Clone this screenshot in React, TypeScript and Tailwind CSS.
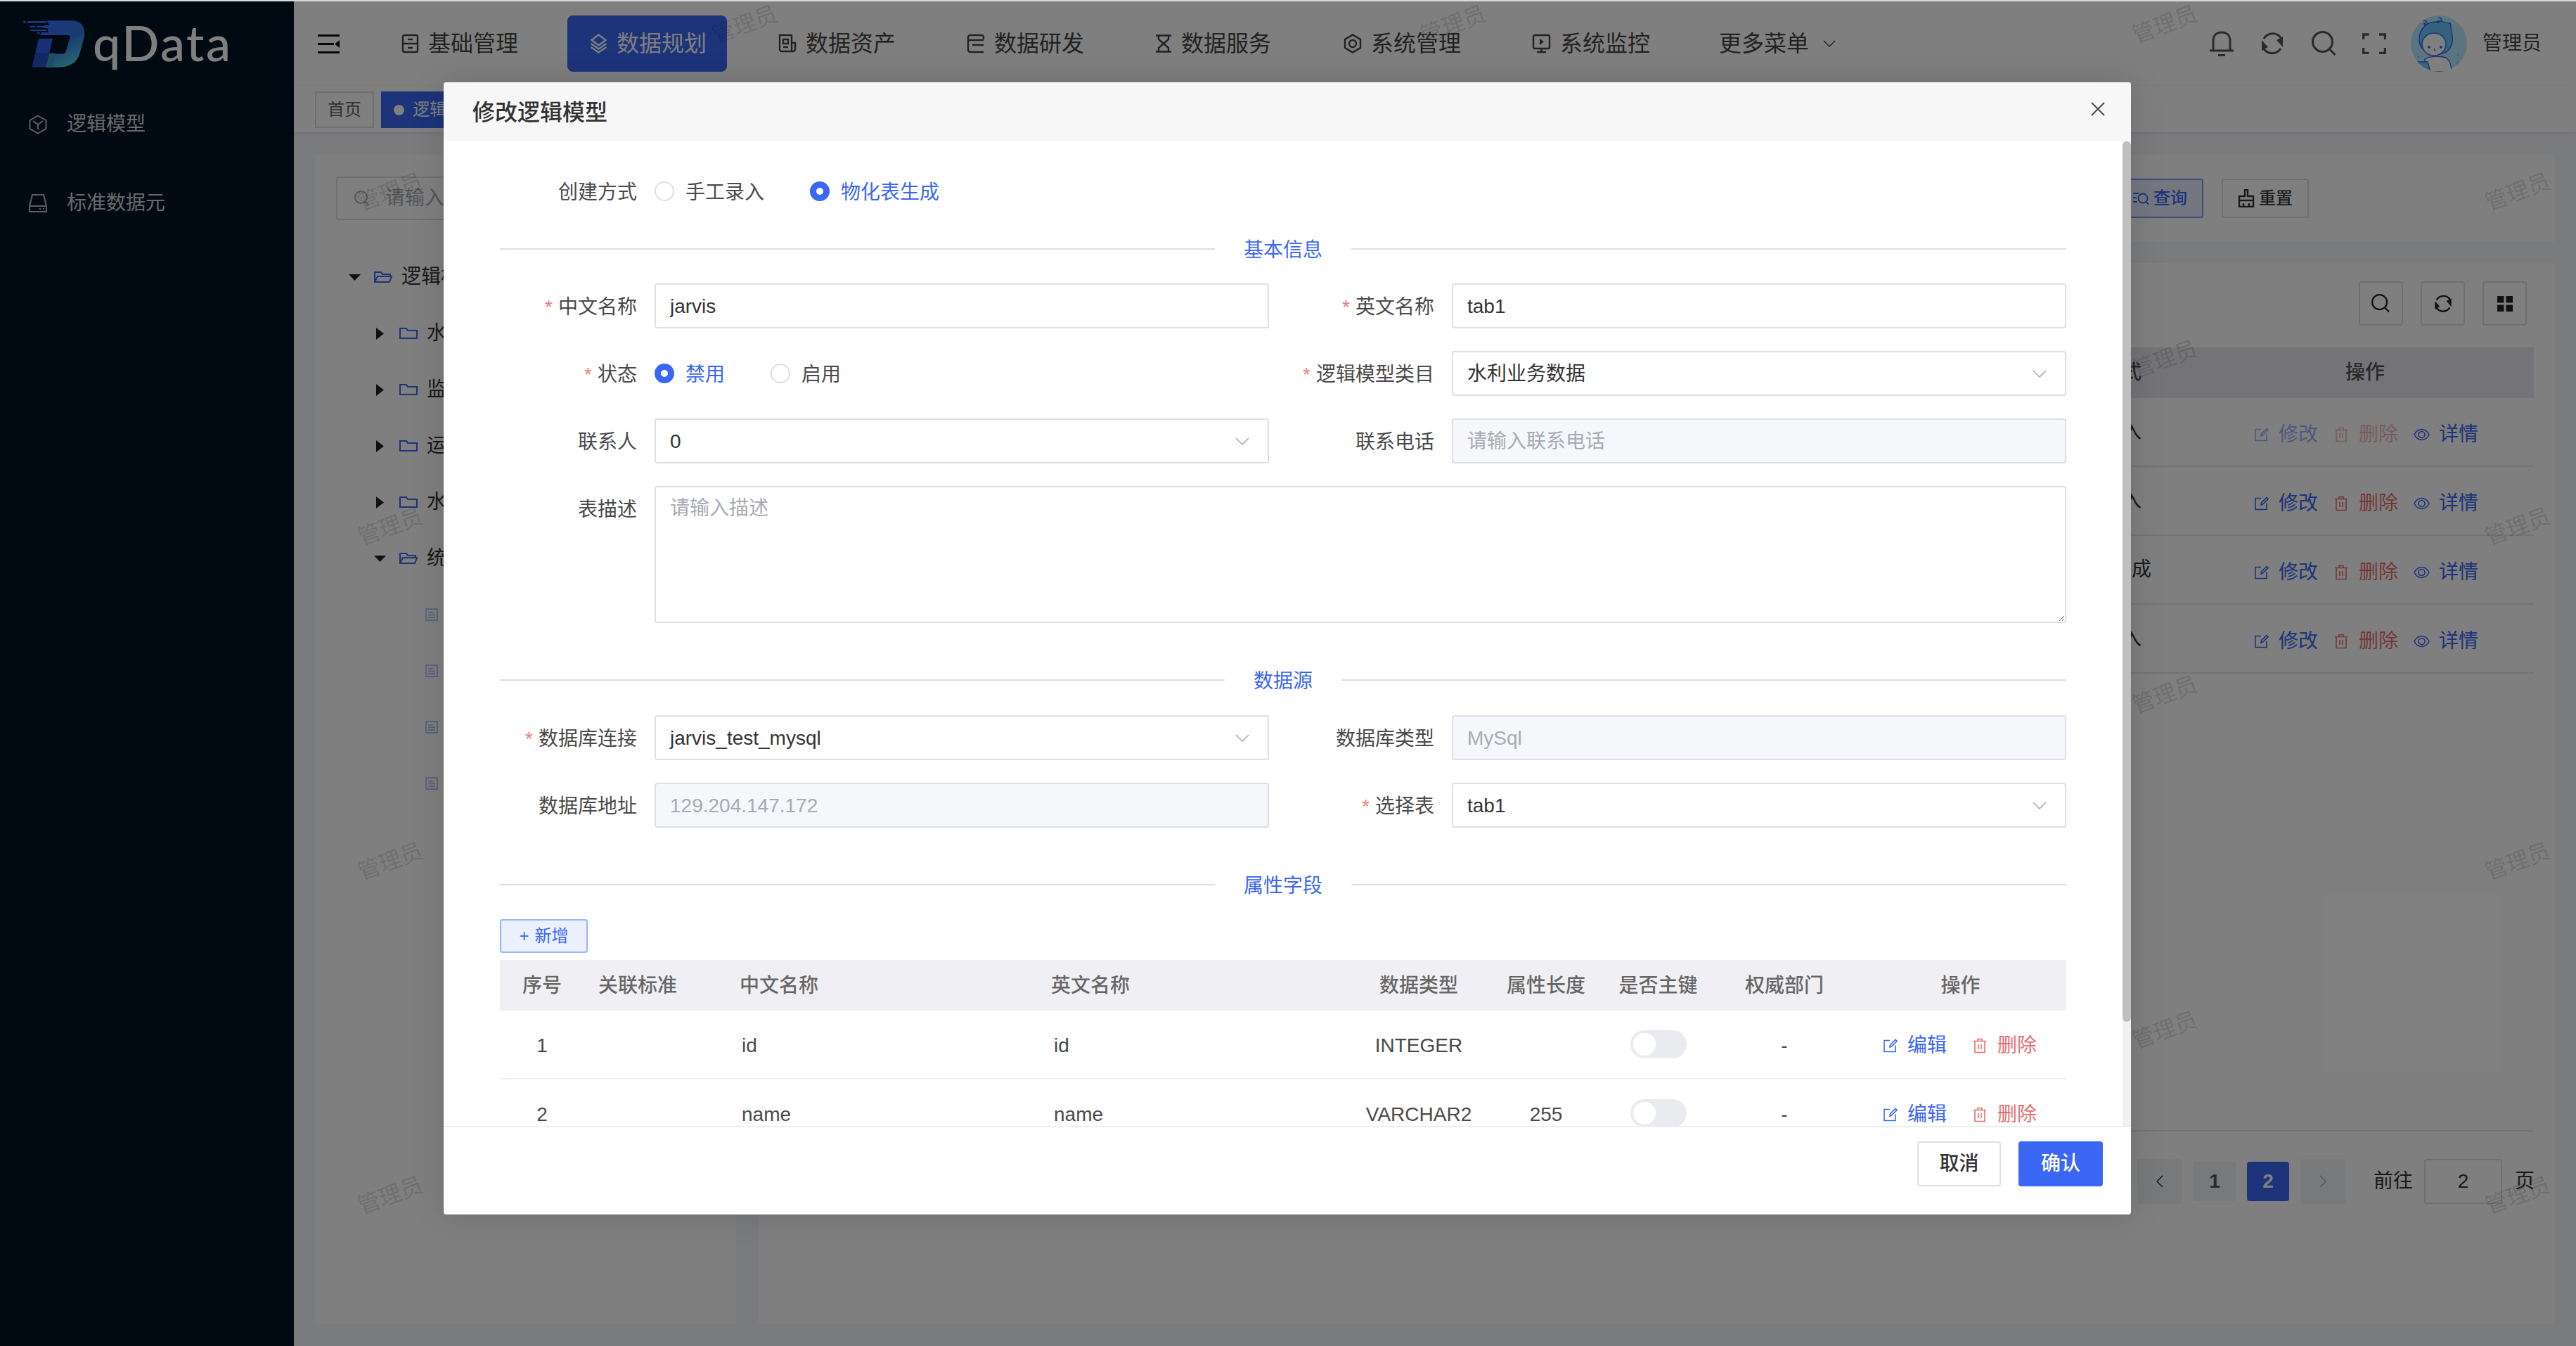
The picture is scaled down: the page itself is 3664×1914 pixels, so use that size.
import { ReactNode } from "react";

const stack = "[font-family:'Liberation_Sans','Noto_Sans_CJK_SC',sans-serif]";
const tableCols = "grid grid-cols-[120px_152px_492px_442px_202px_160px_159px_200px_301px]";

const IconBase = ({ w, h, vw, vh, sw = 2.4, children }: { w: number; h: number; vw?: number; vh?: number; sw?: number; children: ReactNode }) => (
  <svg width={w} height={h} viewBox={`0 0 ${vw ?? w} ${vh ?? h}`} fill="none" stroke="currentColor" strokeWidth={sw} className="shrink-0">
    {children}
  </svg>
);

const MenuIcon = ({ kind }: { kind: string }) => {
  if (kind === "base")
    return (
      <IconBase w={25} h={28}>
        <rect x="2" y="2" width="21" height="24" rx="2" />
        <path d="M2 14h21M9 8h7M9 20h7" />
      </IconBase>
    );
  if (kind === "plan")
    return (
      <IconBase w={25} h={28}>
        <path d="M12.5 1.5 22.500 9l-10 7.5L2.500 9z" />
        <path d="m1.500 14 11 7.500L23.500 14M1.500 19l11 7.500L23.500 19" />
      </IconBase>
    );
  if (kind === "asset")
    return (
      <IconBase w={26} h={28}>
        <path d="M21 25H5a3 3 0 0 1-3-3V2h17v23" />
        <path d="M19 13h5v9a3 3 0 0 1-3 3M7 8h7v6H7zM7 19h7" />
      </IconBase>
    );
  if (kind === "dev")
    return (
      <IconBase w={26} h={28}>
        <path d="M24 8V5a3 3 0 0 0-3-3H5a3 3 0 0 0-3 3v18a3 3 0 0 0 3 3h19" />
        <path d="M2 9h22M8 16h16" />
      </IconBase>
    );
  if (kind === "service")
    return (
      <IconBase w={24} h={28}>
        <path d="M1 2.5h22M1 25.5h22M5 3v5l14 12v5M19 3v5L5 20v5" />
      </IconBase>
    );
  if (kind === "system")
    return (
      <IconBase w={26} h={28}>
        <path d="M13 1.5 24 8v12l-11 6.5L2 20V8z" />
        <circle cx="13" cy="14" r="5" />
      </IconBase>
    );
  return (
    <IconBase w={27} h={28}>
      <rect x="2" y="2" width="23" height="19" rx="2" />
      <path d="M7 26h13M13.5 21v5" />
      <path d="m11 7 6 4.5-6 4.5z" fill="currentColor" stroke="none" />
    </IconBase>
  );
};

const Chevron = ({ w = 20, cls = "" }: { w?: number; cls?: string }) => (
  <svg width={w} height={w * 0.55} viewBox="0 0 20 11" fill="none" stroke="currentColor" strokeWidth="1.6" className={cls}>
    <path d="m1 1 9 9 9-9" />
  </svg>
);

const SyncIcon = ({ size = 36 }: { size?: number }) => (
  <svg width={size} height={size} viewBox="0 0 36 36" fill="none" stroke="currentColor" strokeWidth="3">
    <path d="M6 11A14.500 14.500 0 0 1 30.500 10M30 25A14.500 14.500 0 0 1 5 24" />
    <path d="M33 8v15l-9-10zM3 28V13l9 10z" fill="currentColor" stroke="none" />
  </svg>
);

const SearchIcon = ({ size = 36 }: { size?: number }) => (
  <svg width={size} height={size} viewBox="0 0 36 36" fill="none" stroke="currentColor" strokeWidth="3">
    <circle cx="15.500" cy="15.500" r="14" />
    <path d="m25.500 26 8 8" />
  </svg>
);

const EditIcon = () => (
  <svg width="20" height="20" viewBox="0 0 20 20" fill="none" stroke="currentColor" strokeWidth="1.6" className="shrink-0">
    <path d="M9 2.500H1v16h16v-9" />
    <path d="m9 12 .5-3L17 1.500l2 2L11.500 11z" />
  </svg>
);

const TrashIcon = () => (
  <svg width="20" height="22" viewBox="0 0 20 22" fill="none" stroke="currentColor" strokeWidth="1.6" className="shrink-0">
    <path d="M1 4.500h18M7 4.500V1.500h6v3M3 4.500v16h14v-16M8 9v7M12 9v7" />
  </svg>
);

const EyeIcon = () => (
  <svg width="23" height="18" viewBox="0 0 23 18" fill="none" stroke="currentColor" strokeWidth="1.6" className="shrink-0">
    <path d="M1 9c2.500-5 6-7.500 10.500-7.500S19.500 4 22 9c-2.500 5-6 7.500-10.500 7.500S3.500 14 1 9z" />
    <circle cx="11.500" cy="9" r="4.500" />
  </svg>
);

const FolderIcon = ({ open }: { open?: boolean }) => (
  <svg width="26" height="16" viewBox="0 0 26 16" fill="none" stroke="#3a67f4" strokeWidth="2" className="shrink-0">
    {open ? <path d="M1 15V1h9l2 3h11v3M1 15 5 7h20l-3 8z" /> : <path d="M1 15V1h9l2 3h13v11z" />}
  </svg>
);

const Caret = ({ open }: { open?: boolean }) =>
  open ? (
    <svg width="17" height="9" viewBox="0 0 17 9" className="shrink-0"><path d="M0 0h17L8.500 9z" fill="#222" /></svg>
  ) : (
    <svg width="11" height="17" viewBox="0 0 11 17" className="shrink-0"><path d="M0 0v17l11-8.500z" fill="#222" /></svg>
  );

const TreeRow = ({ pl, open, caret = true, folder = true, text }: { pl: number; open?: boolean; caret?: boolean; folder?: boolean; text: string }) => (
  <div className="h-[80px] flex items-center relative whitespace-nowrap text-[28px] text-[#333]" style={{ paddingLeft: pl }}>
    {caret && <span className="w-[36px] mr-[10px] flex justify-center"><Caret open={open} /></span>}
    {folder ? (
      <FolderIcon open={open} />
    ) : (
      <svg width="18" height="18" viewBox="0 0 18 18" fill="none" stroke="#a3b8f8" strokeWidth="1.5" className="shrink-0">
        <path d="M1 1h16v16H1zM4 6h7M4 9.500h10M4 13h10" />
      </svg>
    )}
    <span className="ml-[13px]">{text}</span>
  </div>
);

const Label = ({ text, req }: { text: string; req?: boolean }) => (
  <div className="w-[220px] shrink-0 pr-[25px] text-right text-[28px] leading-[64px] text-[#4a4a4a] whitespace-nowrap translate-y-[2px]">
    {req && <span className="text-[#ee7a7a] mr-[8px]">*</span>}
    {text}
  </div>
);

const Input = ({ value, placeholder, disabled }: { value?: string; placeholder?: string; disabled?: boolean }) => (
  <input
    readOnly
    value={value ?? ""}
    placeholder={placeholder}
    className={`flex-1 min-w-0 h-[64px] pl-[20px] pr-[20px] pt-[2px] border-2 border-[#dcdfe6] rounded-[4px] text-[28px] outline-none placeholder:text-[#a8abb2] ${disabled ? "bg-[#f5f7fa] text-[#a8abb2]" : "bg-white text-[#333]"}`}
  />
);

const Select = ({ value }: { value: string }) => (
  <div className="flex-1 min-w-0 h-[64px] pl-[20px] pr-[26px] border-2 border-[#dcdfe6] rounded-[4px] flex items-center justify-between text-[28px] text-[#333]">
    <span className="translate-y-[1px]">{value}</span>
    <Chevron cls="text-[#a8abb2]" />
  </div>
);

const Radio = ({ on, text }: { on?: boolean; text: string }) => (
  <div className="flex items-center gap-[16px] text-[28px] leading-[64px]">
    {on ? (
      <span className="w-[28px] h-[28px] rounded-full bg-[#3a67f4] flex items-center justify-center">
        <span className="w-[10px] h-[10px] rounded-full bg-white" />
      </span>
    ) : (
      <span className="w-[28px] h-[28px] rounded-full border-2 border-[#dcdfe6]" />
    )}
    <span className={`translate-y-[2px] ${on ? "text-[#3a67f4]" : "text-[#4a4a4a]"}`}>{text}</span>
  </div>
);

const Section = ({ text, cls }: { text: string; cls: string }) => (
  <div className={`h-[40px] flex items-center ${cls}`}>
    <div className="flex-1 h-[2px] bg-[#dcdfe6]" />
    <span className="px-[41px] text-[28px] text-[#3a67f4] translate-y-[2px]">{text}</span>
    <div className="flex-1 h-[2px] bg-[#dcdfe6]" />
  </div>
);

const Toggle = () => (
  <div className="w-[80px] h-[40px] rounded-full bg-[#e9ebef] flex items-center pl-[4px] -mt-[4px]">
    <span className="w-[32px] h-[32px] rounded-full bg-white" />
  </div>
);

const FieldRow = ({ no, cn, en, type, len }: { no: number; cn: string; en: string; type: string; len: string }) => (
  <div className={`${tableCols} h-[98px] pt-[3px] items-center border-b-2 border-[#eeeff4] text-[28px] text-[#4a4a4a]`}>
    <div className="text-center">{no}</div>
    <div />
    <div className="pl-[72px]">{cn}</div>
    <div className="pl-[24px]">{en}</div>
    <div className="text-center">{type}</div>
    <div className="text-center">{len}</div>
    <div className="flex justify-center"><Toggle /></div>
    <div className="text-center">-</div>
    <div className="flex items-center pl-[41px]">
      <span className="flex items-center gap-[14px] text-[#3a67f4]"><EditIcon /><span>编辑</span></span>
      <span className="flex items-center gap-[15px] text-[#e66f6f] ml-[37px]"><TrashIcon /><span>删除</span></span>
    </div>
  </div>
);

const Watermarks = () => {
  const spots: [number, number][] = [];
  [555, 1563, 2571, 3581].forEach((x) => [273, 749, 1225, 1700].forEach((y) => spots.push([x, y])));
  [1059, 2067, 3079].forEach((x) => [35, 511, 988, 1465].forEach((y) => spots.push([x, y])));
  return (
    <>
      {spots.map(([x, y]) => (
        <span
          key={`${x}-${y}`}
          className="absolute -translate-x-1/2 -translate-y-1/2 -rotate-[20deg] text-[32px] text-black/15 whitespace-nowrap pointer-events-none"
          style={{ left: x, top: y }}
        >
          管理员
        </span>
      ))}
    </>
  );
};

const MENU = [
  { kind: "base", text: "基础管理" },
  { kind: "plan", text: "数据规划", active: true },
  { kind: "asset", text: "数据资产" },
  { kind: "dev", text: "数据研发" },
  { kind: "service", text: "数据服务" },
  { kind: "system", text: "系统管理" },
  { kind: "monitor", text: "系统监控" },
];

const MODEL_ROWS = [
  { mode: "手工录入", dim: true },
  { mode: "手工录入" },
  { mode: "物化表生成" },
  { mode: "手工录入" },
];

const Avatar = () => (
  <svg width="80" height="80" viewBox="0 0 80 80" className="shrink-0">
    <defs>
      <clipPath id="av"><circle cx="40" cy="40" r="40" /></clipPath>
    </defs>
    <g clipPath="url(#av)">
      <rect width="80" height="80" fill="#b9e8ff" />
      <path d="M12 34c0-16 12-26 26-25 6-3 12 3 18 2 3 6 0 8 2 13 4 14-1 30-18 31-18 0-28-8-28-21z" fill="#6fc4ff" stroke="#2f6ff0" strokeWidth="1.500" />
      <ellipse cx="33" cy="41" rx="17" ry="16" fill="#fff" stroke="#2f6ff0" strokeWidth="1.500" />
      <circle cx="26" cy="45" r="2" fill="#2f6ff0" />
      <circle cx="43" cy="45" r="2" fill="#2f6ff0" />
      <path d="M34 47c-1 2 0 4 2 3" stroke="#2f6ff0" fill="none" strokeWidth="1.200" />
      <path d="M24 12c-1-4-3-5-6-5M44 9c0-4-2-6-5-6" stroke="#2f6ff0" fill="none" strokeWidth="1.500" />
      <circle cx="20" cy="12" r="2" fill="#2f6ff0" />
      <circle cx="39" cy="9" r="2" fill="#2f6ff0" />
      <path d="M20 80V62c6-4 22-5 30-2 6 4 8 12 8 20z" fill="#fff" stroke="#2f6ff0" strokeWidth="1.500" />
      <path d="M0 66h24l4 14H0z" fill="#6fc4ff" stroke="#2f6ff0" strokeWidth="1.500" />
      <circle cx="11" cy="59" r="1.500" fill="#6fc4ff" />
      <circle cx="66" cy="67" r="1.500" fill="#6fc4ff" />
      <circle cx="67" cy="56" r="1.500" fill="#6fc4ff" />
    </g>
  </svg>
);

export default function App() {
  return (
    <div className={`relative w-[3664px] h-[1914px] overflow-hidden flex flex-col bg-[#f5f6fa] ${stack}`}>
      <div className="h-[2px] shrink-0 bg-[#d8d8d8]" />
      <div className="flex-1 min-h-0 flex">
        {/* sidebar */}
        <aside className="w-[418px] shrink-0 bg-[#021224] text-white/90">
          <div className="h-[120px] flex items-center pl-[32px] gap-[10px]">
            <svg width="90" height="69" viewBox="36 34 270 208" className="shrink-0">
              <defs>
                <linearGradient id="lg" x1="0.3" y1="0" x2="0.8" y2="1">
                  <stop offset="0" stopColor="#3470ff" />
                  <stop offset="0.45" stopColor="#3478e0" />
                  <stop offset="1" stopColor="#55d8e8" />
                </linearGradient>
              </defs>
              <path d="M140 38H245C290 38 310 70 298 115L282 175C270 220 235 238 190 238H135L150 180H205C215 180 220 175 223 165L238 110C240 103 236 100 228 100H112L116 88H146L142 70H125L128 58H150z" fill="url(#lg)" />
              <path d="M105 115H165L150 178H90z" fill="#2f62f0" />
              <path d="M90 178H150L135 238H75z" fill="#2850c8" />
              <path d="M135 238 150 178H175L165 238z" fill="#3d9cc8" />
              <circle cx="44" cy="44" r="6" fill="#3470ff" />
              <path d="M55 40H140V48H55zM65 60H90V67H65zM96 60H140V67H96zM70 76H140V83H70zM98 88H110V95H98z" fill="#3470ff" />
            </svg>
            <span className="[font-family:Lato,sans-serif] text-[70px] leading-none text-white font-medium tracking-[2.5px] -mt-[4px]">qData</span>
          </div>
          <div className="mt-[23px] flex items-center h-[64px] pl-[41px] gap-[28px] text-[28px]">
            <svg width="26" height="28" viewBox="0 0 26 28" fill="none" stroke="currentColor" strokeWidth="2" className="shrink-0 opacity-80">
              <path d="M13 1.500 24.500 8v12L13 26.500 1.500 20V8z" />
              <path d="m6 9 7 5 7-5M13 14v7" />
            </svg>
            <span className="opacity-90">逻辑模型</span>
          </div>
          <div className="mt-[48px] flex items-center h-[64px] pl-[41px] gap-[28px] text-[28px]">
            <svg width="26" height="28" viewBox="0 0 26 28" fill="none" stroke="currentColor" strokeWidth="2" className="shrink-0 opacity-80">
              <path d="M5 2h16l4 16v8H1v-8zM1 18h24" />
              <path d="M15 22h2M20 22h2" />
            </svg>
            <span className="opacity-90">标准数据元</span>
          </div>
        </aside>

        <div className="flex-1 min-w-0 flex flex-col">
          {/* top bar */}
          <header className="h-[120px] shrink-0 bg-white flex items-center pl-[34px] text-[#444]">
            <svg width="31" height="27" viewBox="0 0 31 27" className="shrink-0 text-[#111]" fill="currentColor">
              <path d="M0 0h31v3H0zM0 12h23v3H0zM0 24h31v3H0zM31 8v11l-7-5.500z" />
            </svg>
            <nav className="ml-[56px] flex items-center gap-[41px]">
              {MENU.map((m) => (
                <div key={m.text} className={`w-[227px] h-[80px] rounded-[8px] flex items-center pl-[32px] gap-[13px] text-[32px] ${m.active ? "bg-[#3a67f4] text-white" : ""}`}>
                  <MenuIcon kind={m.kind} />
                  <span className="whitespace-nowrap">{m.text}</span>
                </div>
              ))}
              <div className="flex items-center gap-[20px] text-[32px] whitespace-nowrap pl-[30px]">
                <span>更多菜单</span>
                <Chevron w={18} />
              </div>
            </nav>
            <div className="ml-auto pr-[49px] flex items-center">
              <svg width="34" height="36" viewBox="0 0 34 36" fill="none" stroke="currentColor" strokeWidth="3" className="text-[#555]">
                <path d="M5 28V14C5 6 10 2 17 2s12 4 12 12v14M0 28h34" />
                <path d="M12 34.500h10" />
              </svg>
              <span className="ml-[37px] text-[#555]"><SyncIcon /></span>
              <span className="ml-[38px] text-[#555]"><SearchIcon /></span>
              <svg width="34" height="30" viewBox="0 0 34 30" fill="none" stroke="currentColor" strokeWidth="3.500" className="ml-[36px] text-[#555]">
                <path d="M1.500 9V2h8M24 2h8.500v7M1.500 21v7.500h8M24 28.500h8.500V21" />
              </svg>
              <div className="ml-[35px]"><Avatar /></div>
              <span className="ml-[22px] text-[28px] whitespace-nowrap">管理员</span>
            </div>
          </header>

          {/* tabs */}
          <div className="h-[66px] shrink-0 bg-white shadow-[0_2px_6px_rgba(0,0,0,0.08)] flex items-start pt-[8px] pl-[30px] gap-[10px] text-[24px]">
            <div className="w-[84px] h-[52px] border-2 border-[#ddd] flex items-center justify-center text-[#666]">首页</div>
            <div className="w-[200px] h-[52px] bg-[#3a67f4] flex items-center pl-[18px] gap-[12px] text-white">
              <span className="w-[15px] h-[15px] rounded-full bg-white" />
              <span>逻辑模型</span>
            </div>
          </div>

          {/* page */}
          <main className="flex-1 min-h-0 flex pt-[32px] pl-[30px] pr-[30px] pb-[31px] gap-[32px]">
            <section className="w-[599px] shrink-0 bg-white rounded-[4px] pt-[31px] pl-[30px] pr-[30px]">
              <div className="h-[62px] border-2 border-[#dcdfe6] rounded-[4px] flex items-center pl-[24px] gap-[22px] text-[28px] text-[#a8abb2]">
                <SearchIcon size={22} />
                <span>请输入</span>
              </div>
              <div className="mt-[41px] -ml-[30px]">
                <TreeRow pl={38} open text="逻辑模型目录" />
                <TreeRow pl={74} text="水利业务" />
                <TreeRow pl={74} text="监测数据" />
                <TreeRow pl={74} text="运行数据" />
                <TreeRow pl={74} text="水文数据" />
                <TreeRow pl={74} open text="统计数据" />
                <TreeRow pl={157} caret={false} folder={false} text="数据表一" />
                <TreeRow pl={157} caret={false} folder={false} text="数据表二" />
                <TreeRow pl={157} caret={false} folder={false} text="数据表三" />
                <TreeRow pl={157} caret={false} folder={false} text="数据表四" />
              </div>
            </section>

            <div className="flex-1 min-w-0 flex flex-col gap-[30px]">
              <section className="h-[124px] shrink-0 bg-white rounded-[4px] flex items-start justify-end pt-[34px] pr-[350px] gap-[26px] text-[24px]">
                <button className="w-[124px] h-[56px] border-2 border-[#7d9bf8] bg-[#e8eefe] rounded-[4px] flex items-center justify-center gap-[6px] text-[#3a67f4] font-medium">
                  <svg width="24" height="24" viewBox="0 0 24 24" fill="none" stroke="currentColor" strokeWidth="1.800" className="shrink-0">
                    <path d="M1 5h8M1 11h5M1 17h6" />
                    <circle cx="15" cy="12" r="6.500" />
                    <path d="m20 17 3 4" />
                  </svg>
                  查询
                </button>
                <button className="w-[124px] h-[56px] border-2 border-[#dcdfe6] rounded-[4px] flex items-center justify-center gap-[6px] text-[#333] font-medium">
                  <svg width="24" height="26" viewBox="0 0 24 26" fill="none" stroke="currentColor" strokeWidth="2.400" className="shrink-0">
                    <path d="M10 1h4v9h8v15H2V10h8zM2 16h20M8 25v-5M16 25v-5" />
                  </svg>
                  重置
                </button>
              </section>

              <section className="flex-1 min-h-0 bg-white rounded-[4px] pt-[26px] pl-[30px] pr-[30px] flex flex-col">
                <div className="h-[63px] shrink-0 flex justify-end gap-[25px] pr-[10px] text-[#222]">
                  <div className="w-[63px] h-[63px] border-2 border-[#dcdfe6] rounded-[4px] flex items-center justify-center"><SearchIcon size={27} /></div>
                  <div className="w-[63px] h-[63px] border-2 border-[#dcdfe6] rounded-[4px] flex items-center justify-center"><SyncIcon size={28} /></div>
                  <div className="w-[63px] h-[63px] border-2 border-[#dcdfe6] rounded-[4px] flex items-center justify-center">
                    <svg width="22" height="22" viewBox="0 0 22 22" fill="currentColor"><path d="M0 0h9.500v9.500H0zM12.500 0H22v9.500h-9.500zM0 12.500h9.500V22H0zM12.500 12.500H22V22h-9.500z" /></svg>
                  </div>
                </div>
                <div className="mt-[31px] h-[1115px] shrink-0 border-b-2 border-[#e8e9ee]">
                  <div className="grid grid-cols-[1fr_180px_44px_480px] h-[72px] items-center bg-[#e9e9f0] text-[28px] font-medium text-[#555]">
                    <div />
                    <div className="text-center">创建方式</div>
                    <div />
                    <div className="text-center">操作</div>
                  </div>
                  {MODEL_ROWS.map((r, i) => (
                    <div key={i} className="grid grid-cols-[1fr_180px_44px_480px] h-[98px] items-center border-b-2 border-[#e8e9ee] text-[28px] text-[#333]">
                      <div />
                      <div className="text-center">{r.mode}</div>
                      <div />
                      <div className="flex items-center pl-[83px] pt-[8px]">
                        <span className={`flex items-center ${r.dim ? "opacity-50" : ""}`}>
                          <span className="flex items-center gap-[14px] text-[#3a67f4]"><EditIcon /><span>修改</span></span>
                          <span className="flex items-center gap-[15px] ml-[23px] text-[#e66f6f]"><TrashIcon /><span>删除</span></span>
                        </span>
                        <span className="flex items-center gap-[13px] ml-[22px] text-[#3a67f4]"><EyeIcon /><span>详情</span></span>
                      </div>
                    </div>
                  ))}
                </div>
                <div className="mt-[39px] h-[64px] shrink-0 flex items-center justify-end -mr-[1px] text-[28px] text-[#333]">
                  <div className="w-[64px] h-[64px] rounded-[4px] bg-[#f0f2f5] flex items-center justify-center">
                    <Chevron w={18} cls="rotate-90" />
                  </div>
                  <div className="ml-[16px] w-[60px] h-[56px] rounded-[4px] bg-[#f0f2f5] flex items-center justify-center font-bold text-[#555]">1</div>
                  <div className="ml-[16px] w-[60px] h-[56px] rounded-[4px] bg-[#3a67f4] flex items-center justify-center font-bold text-white">2</div>
                  <div className="ml-[16px] w-[64px] h-[64px] rounded-[4px] bg-[#f0f2f5] flex items-center justify-center text-[#aaa]">
                    <Chevron w={18} cls="-rotate-90" />
                  </div>
                  <span className="ml-[40px]">前往</span>
                  <div className="ml-[16px] w-[111px] h-[64px] border-2 border-[#dcdfe6] rounded-[4px] flex items-center justify-center">2</div>
                  <span className="ml-[18px]">页</span>
                </div>
              </section>
            </div>
          </main>
        </div>
      </div>

      <Watermarks />

      {/* dialog mask */}
      <div className="absolute inset-x-0 top-[2px] bottom-0 bg-black/50" />

      {/* dialog */}
      <div className="absolute left-[631px] top-[117px] w-[2400px] h-[1610px] bg-white rounded-[4px] overflow-hidden shadow-[0_0_48px_rgba(0,0,0,0.15)] flex flex-col">
        <div className="h-[84px] shrink-0 bg-[#f7f7f7] flex items-center justify-between pl-[41px] pr-[37px]">
          <span className="text-[32px] font-medium text-[#333] translate-y-[1px]">修改逻辑模型</span>
          <svg width="20" height="20" viewBox="0 0 20 20" stroke="#444" strokeWidth="1.800" className="-mt-[8px]">
            <path d="m1 1 18 18M19 1 1 19" />
          </svg>
        </div>

        <div className="flex-1 min-h-0 flex">
          <div className="flex-1 min-w-0 overflow-hidden pl-[80px] pr-[80px] pt-[39px]">
            <div className="flex h-[64px] items-center">
              <Label text="创建方式" />
              <div className="flex gap-[65px]">
                <Radio text="手工录入" />
                <Radio on text="物化表生成" />
              </div>
            </div>

            <Section text="基本信息" cls="mt-[30px]" />
            <div className="mt-[29px] grid grid-cols-2 gap-x-[40px] gap-y-[32px]">
              <div className="flex items-center"><Label req text="中文名称" /><Input value="jarvis" /></div>
              <div className="flex items-center"><Label req text="英文名称" /><Input value="tab1" /></div>
              <div className="flex items-center h-[64px]">
                <Label req text="状态" />
                <div className="flex gap-[65px]">
                  <Radio on text="禁用" />
                  <Radio text="启用" />
                </div>
              </div>
              <div className="flex items-center"><Label req text="逻辑模型类目" /><Select value="水利业务数据" /></div>
              <div className="flex items-center"><Label text="联系人" /><Select value="0" /></div>
              <div className="flex items-center"><Label text="联系电话" /><Input disabled placeholder="请输入联系电话" /></div>
              <div className="col-span-2 flex items-start">
                <Label text="表描述" />
                <textarea
                  readOnly
                  placeholder="请输入描述"
                  className="flex-1 min-w-0 h-[195px] px-[20px] py-[12px] border-2 border-[#dcdfe6] rounded-[4px] text-[28px] leading-[36px] outline-none placeholder:text-[#a8abb2]"
                />
              </div>
            </div>

            <Section text="数据源" cls="mt-[61px]" />
            <div className="mt-[30px] grid grid-cols-2 gap-x-[40px] gap-y-[32px]">
              <div className="flex items-center"><Label req text="数据库连接" /><Select value="jarvis_test_mysql" /></div>
              <div className="flex items-center"><Label text="数据库类型" /><Input disabled placeholder="MySql" /></div>
              <div className="flex items-center"><Label text="数据库地址" /><Input disabled value="129.204.147.172" /></div>
              <div className="flex items-center"><Label req text="选择表" /><Select value="tab1" /></div>
            </div>

            <Section text="属性字段" cls="mt-[61px]" />
            <button className="mt-[29px] w-[125px] h-[48px] border-2 border-[#9db3fa] bg-[#ebf0fe] rounded-[4px] flex items-center justify-center gap-[8px] text-[24px] text-[#3a67f4]">
              <span>+</span><span>新增</span>
            </button>
            <div className={`${tableCols} mt-[10px] h-[72px] pt-[2px] items-center bg-[#f0f0f4] text-[28px] font-medium text-[#666]`}>
              <div className="text-center">序号</div>
              <div className="text-center">关联标准</div>
              <div className="pl-[69px]">中文名称</div>
              <div className="pl-[20px]">英文名称</div>
              <div className="text-center">数据类型</div>
              <div className="text-center">属性长度</div>
              <div className="text-center">是否主键</div>
              <div className="text-center">权威部门</div>
              <div className="text-center">操作</div>
            </div>
            <FieldRow no={1} cn="id" en="id" type="INTEGER" len="" />
            <FieldRow no={2} cn="name" en="name" type="VARCHAR2" len="255" />
          </div>

          <div className="w-[12px] shrink-0 bg-[#f1f1f1]">
            <div className="h-[1252px] rounded-full bg-[#bfbfbf]" />
          </div>
        </div>

        <div className="h-[126px] shrink-0 border-t-2 border-[#eeeeee] flex items-start justify-end pt-[20px] pr-[40px] gap-[25px] text-[28px]">
          <button className="w-[119px] h-[64px] border-2 border-[#dcdfe6] rounded-[4px] bg-white text-[#333] font-medium">取消</button>
          <button className="w-[120px] h-[64px] rounded-[4px] bg-[#3a67f4] text-white font-medium">确认</button>
        </div>
      </div>
    </div>
  );
}
